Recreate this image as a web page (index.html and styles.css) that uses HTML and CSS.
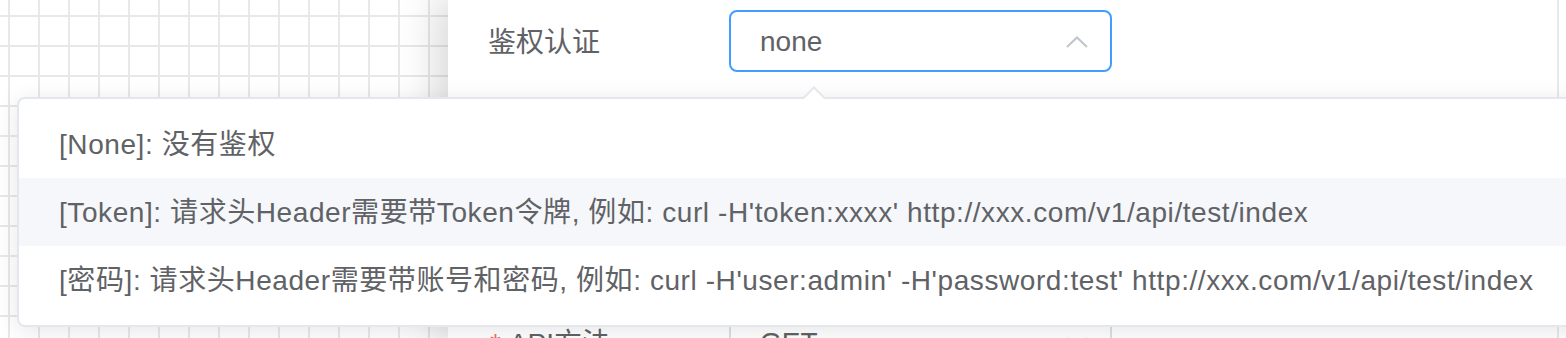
FILE: index.html
```html
<!DOCTYPE html>
<html lang="zh-CN">
<head>
<meta charset="utf-8">
<title>鉴权认证</title>
<link rel="stylesheet" href="styles.css">
</head>
<body>
<div class="page">
  <div class="canvas"></div>
  <div class="drawer">
    <div class="form">
      <div class="form-item">
        <label class="form-label">鉴权认证</label>
        <div class="select is-focus">
          <span class="select-value">none</span>
          <svg class="chevron" width="22" height="12" viewBox="0 0 22 12"><polyline points="1,11 11,1.5 21,11" fill="none" stroke="#c0c4cc" stroke-width="2"/></svg>
        </div>
      </div>
      <div class="form-item second">
        <label class="form-label"><span class="req">*</span>API方法</label>
        <div class="select">
          <span class="select-value">GET</span>
          <svg class="chevron" width="22" height="12" viewBox="0 0 22 12"><polyline points="1,1 11,10.5 21,1" fill="none" stroke="#c0c4cc" stroke-width="2"/></svg>
        </div>
      </div>
    </div>
    <div class="scrollbar"></div>
  </div>
  <div class="dropdown">
    <ul class="dropdown-list">
      <li class="dropdown-item">[None]: 没有鉴权</li>
      <li class="dropdown-item hover">[Token]: 请求头Header需要带Token令牌, 例如: curl -H'token:xxxx' http://xxx.com/v1/api/test/index</li>
      <li class="dropdown-item">[密码]: 请求头Header需要带账号和密码, 例如: curl -H'user:admin' -H'password:test' http://xxx.com/v1/api/test/index</li>
    </ul>
  </div>
</div>
</body>
</html>
```
FILE: styles.css
```css
html, body {
  margin: 0;
  padding: 0;
  background: #fff;
}
body {
  font-family: "Liberation Sans", "Noto Sans CJK SC", sans-serif;
  color: #606266;
}
.page {
  position: relative;
  width: 1566px;
  height: 338px;
  overflow: hidden;
  display: flex;
}
.canvas {
  width: 448px;
  flex: none;
  background-color: #fff;
  background-image:
    linear-gradient(to right, #e8e8e8 2px, transparent 2px),
    linear-gradient(to bottom, #e8e8e8 2px, transparent 2px);
  background-size: 30px 30px;
  background-position: 8px 15px;
}
.drawer {
  flex: 1;
  display: flex;
  background: #fff;
  position: relative;
  z-index: 1;
  box-shadow: -6px 0 40px 4px rgba(0, 0, 0, 0.16);
}
.form {
  flex: 1;
  padding: 11px 0 0 40px;
  display: flex;
  flex-direction: column;
}
.form-item {
  display: flex;
  align-items: center;
  height: 62px;
}
.form-item.second {
  margin-top: 239px;
}
.form-label {
  width: 241px;
  font-size: 28px;
  line-height: 62px;
  padding-top: 2px;
  color: #606266;
}
.req {
  color: #f56c6c;
  margin-right: 8px;
  margin-left: 2px;
}
.select {
  width: 383px;
  height: 62px;
  margin-top: -2px;
  box-sizing: border-box;
  border: 2px solid #dcdfe6;
  border-radius: 8px;
  display: flex;
  align-items: center;
  justify-content: space-between;
  padding: 2px 22px 0 29px;
}
.select.is-focus {
  border-color: #409eff;
}
.select-value {
  font-size: 28px;
  color: #606266;
}
.chevron {
  display: block;
}
.scrollbar {
  width: 7px;
  border-left: 2px solid #e9e9eb;
  background: #fff;
}
.dropdown {
  position: absolute;
  z-index: 5;
  left: 17px;
  top: 97px;
  width: 1600px;
  box-sizing: border-box;
  border: 2px solid #e4e7ed;
  border-radius: 8px;
  background: #fff;
  box-shadow: 0 4px 24px rgba(0, 0, 0, 0.1);
}
.dropdown::before,
.dropdown::after {
  content: "";
  position: absolute;
  left: 783px;
  width: 0;
  height: 0;
  border: 12px solid transparent;
  border-top-width: 0;
}
.dropdown::before {
  top: -13px;
  border-bottom: 12px solid #e4e7ed;
}
.dropdown::after {
  top: -10px;
  border-bottom: 12px solid #fff;
}
.dropdown-list {
  list-style: none;
  margin: 0;
  padding: 11px 0;
}
.dropdown-item {
  height: 68px;
  line-height: 70px;
  padding: 0 40px;
  font-size: 28px;
  letter-spacing: 0.58px;
  color: #606266;
  white-space: nowrap;
}
.dropdown-item.hover {
  background: #f5f7fa;
}
```
